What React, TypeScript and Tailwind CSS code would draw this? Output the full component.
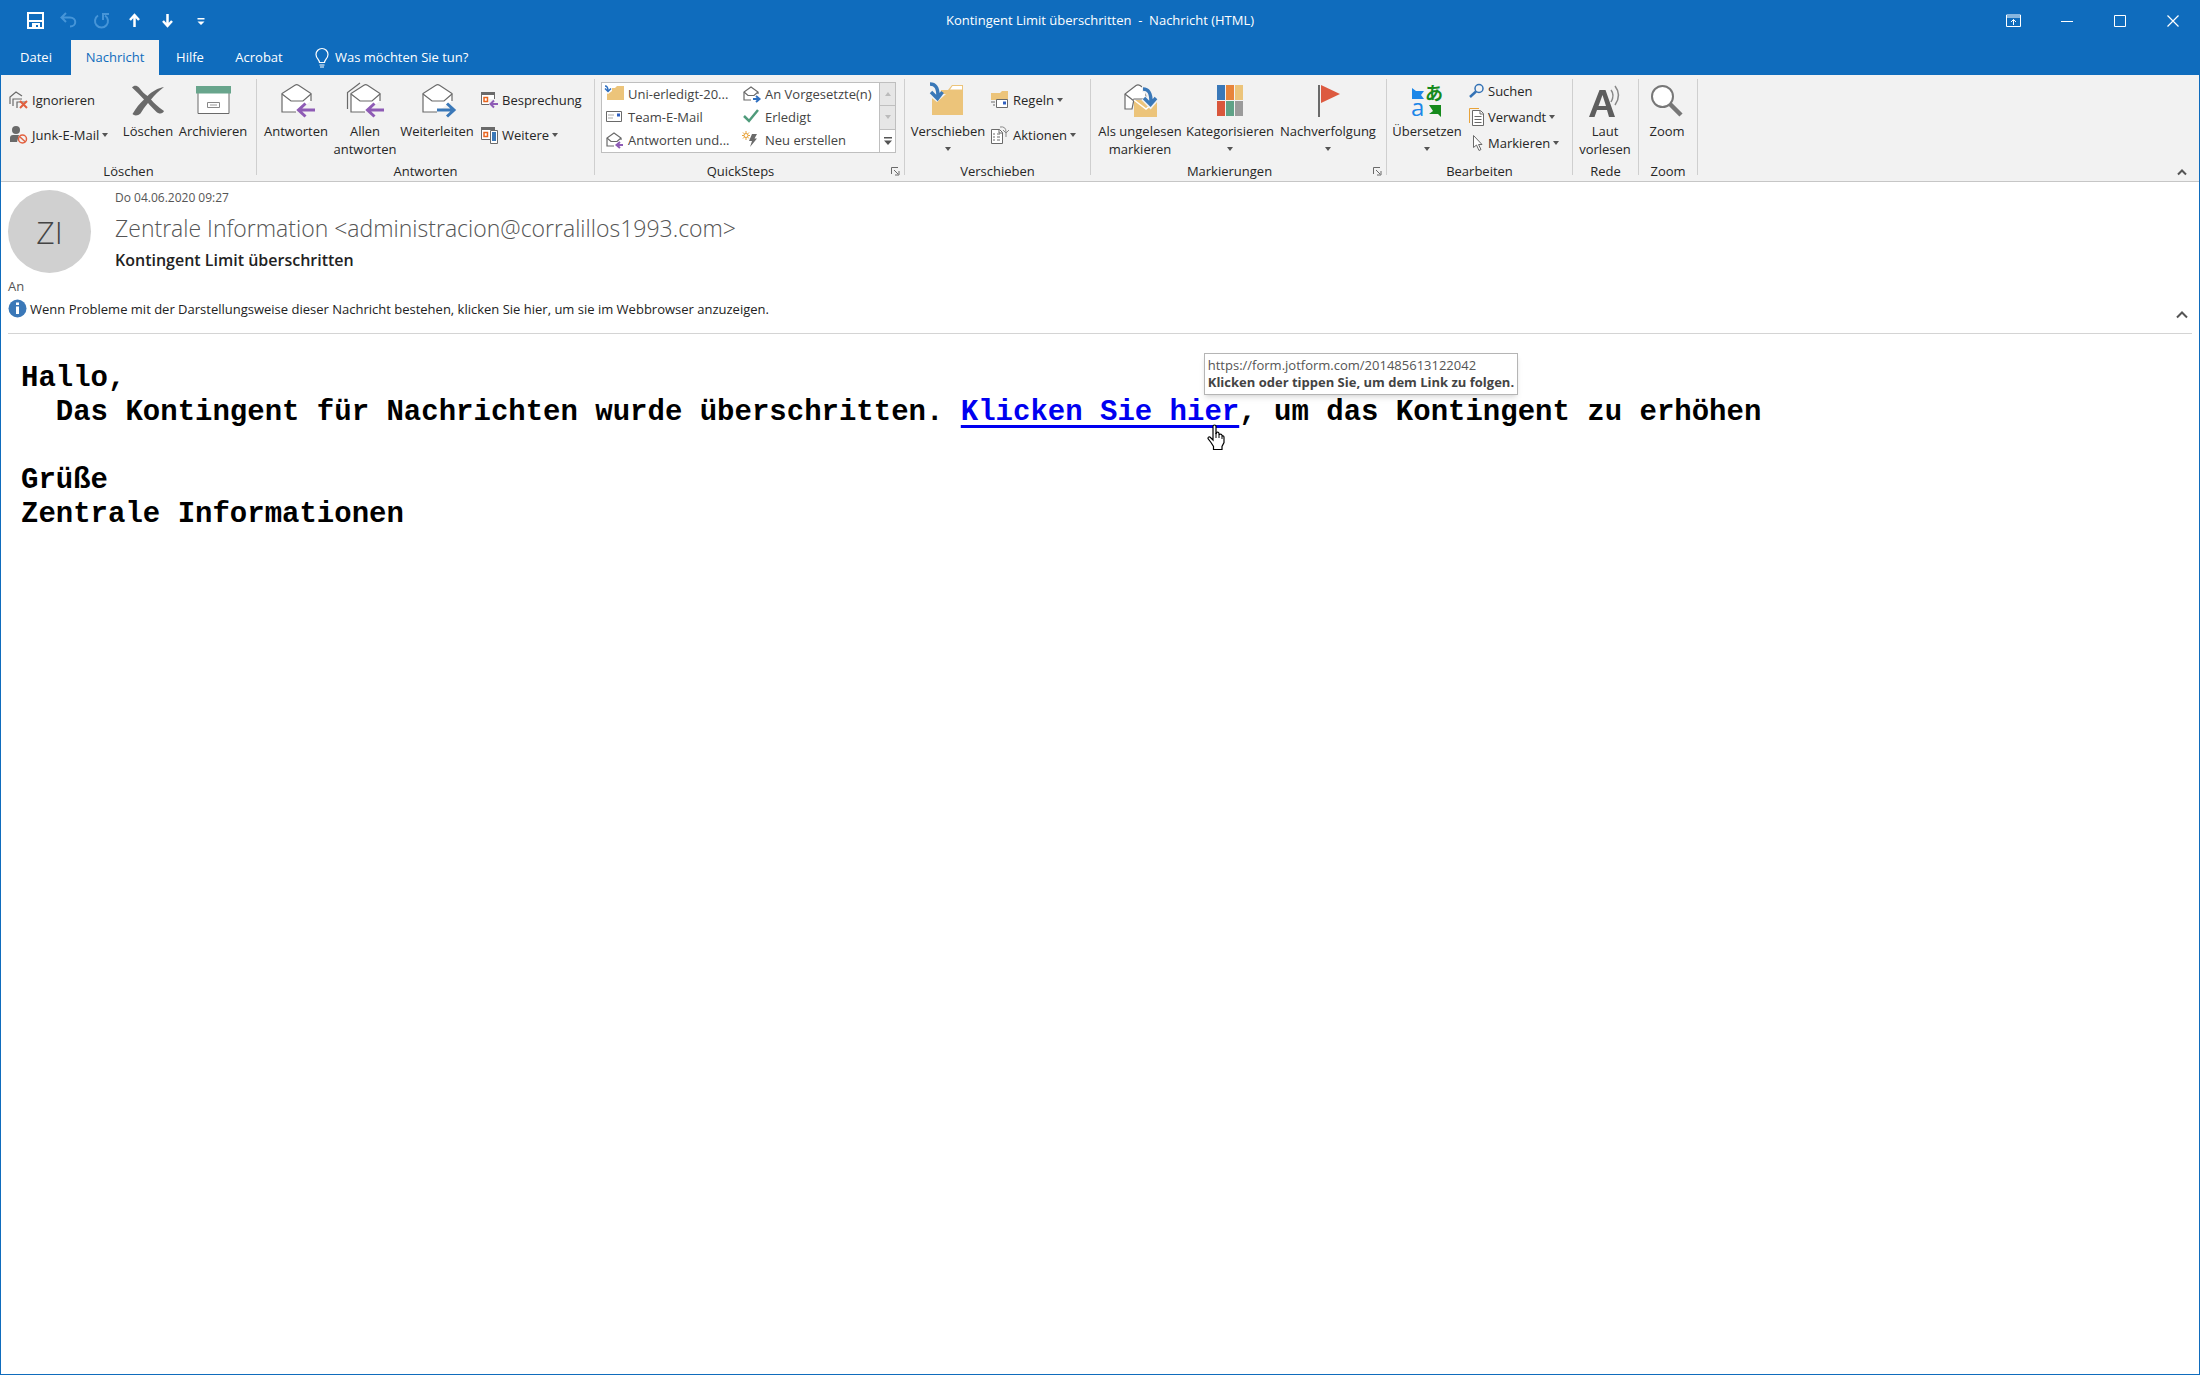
import type { ReactNode } from "react";

const GRAY = "#6a6a6a";
const PURPLE = "#8e5bb5";
const BLUE = "#3a78b8";
const SAND = "#ecc47a";

type IconProps = { w?: number; h?: number; children: ReactNode };

function Svg({ w = 36, h = 36, children }: IconProps) {
  return (
    <svg width={w} height={h} viewBox={`0 0 ${w} ${h}`} fill="none" aria-hidden="true" className="shrink-0 overflow-visible">
      {children}
    </svg>
  );
}

function Caret() {
  return (
    <Svg w={6} h={4}>
      <path d="M0 0h6L3 4z" fill="#555" />
    </Svg>
  );
}

/* ---------- large icons ---------- */

function Envelope({ arrow, stacked }: { arrow: "left" | "right"; stacked?: boolean }) {
  return (
    <Svg>
      {stacked && <path d="M.5 27V10.500L13 1" stroke={GRAY} strokeWidth="1.200" />}
      <path d="M33 19V11.500L20.500 3.200q-1.800-1-3.600 0L4 11.500V30h14" fill="#fff" stroke={GRAY} strokeWidth="1.200" />
      <path d="M4 12l9 7h12l8-7" stroke={GRAY} strokeWidth="1.200" />
      {arrow === "left" ? (
        <path d="M37 28H21M27.500 21.500L20.500 28l7 6.500" stroke={PURPLE} strokeWidth="3" />
      ) : (
        <path d="M18 28h16M28 21.500l7 6.500-7 6.500" stroke={BLUE} strokeWidth="3" />
      )}
    </Svg>
  );
}

function DeleteIcon() {
  return (
    <Svg>
      <path d="M2 5.500C4 3 7 3.500 9 5.500c3 4 6 7 8.500 8.500C22 9.500 28 6 34 5c-5 4-9.500 8-13 12.500 3 3.500 7 7.500 13 11.500-1 3-5 3.500-8 .5-3-3-6-6-8-8.500-3 3.500-5.500 7-7.500 10.500C8 34 4 34 2.500 32 6 26 10 21 14 17.500 10 13 6 9 2 5.500z" fill={GRAY} />
    </Svg>
  );
}

function ArchiveIcon() {
  return (
    <Svg>
      <path d="M3 10h31v21.500H3z" fill="#fff" stroke={GRAY} />
      <path d="M1 4h35v7.500H1z" fill="#68a58c" />
      <path d="M12.500 20.500h12v5h-12z" stroke="#888" />
      <path d="M15 23h7" stroke="#999" />
    </Svg>
  );
}

function FolderArrow() {
  return (
    <Svg>
      <path d="M2 8h16l4-5h11v30H2z" fill={SAND} />
      <path d="M20 7.500l2.500-3.500H32v3.500z" fill="#fff" />
      <path d="M-2-1h13v13h5l-9 8-9-7z" fill="#f2f2f2" />
      <path d="M0 2c6 0 8 4 8 12M1 10l6.500 6.500L12.500 10" stroke={BLUE} strokeWidth="3.500" />
    </Svg>
  );
}

function UnreadIcon() {
  return (
    <Svg>
      <path d="M10 27H3V12L14 3.500q2-1.200 4 0l6 4V17H12z" fill="#fff" stroke={GRAY} strokeWidth="1.200" />
      <path d="M3 12l9 7" stroke={GRAY} strokeWidth="1.200" />
      <path d="M12 18h23v17H12z" fill={SAND} />
      <path d="M12 18l12 9 11-9" stroke="#fff" strokeWidth="1.500" />
      <path d="M20 7c6 0 8 4 8 13M21.500 16l7 7 6-7" stroke="#f2f2f2" strokeWidth="6" />
      <path d="M21 7c6 0 8 4 8 13M22 16l6.500 6.500L34 16" stroke={BLUE} strokeWidth="3.500" />
    </Svg>
  );
}

function CategoriesIcon() {
  return (
    <Svg>
      <path d="M5 3h8v15H5z" fill={BLUE} />
      <path d="M14 3h8v15h-8z" fill="#e8843a" />
      <path d="M23 3h8v15h-8z" fill={SAND} />
      <path d="M5 19h8v15H5z" fill="#d9573c" />
      <path d="M14 19h8v15h-8z" fill="#5fa287" />
      <path d="M23 19h8v15h-8z" fill="#9b9b9b" />
    </Svg>
  );
}

function FlagIcon() {
  return (
    <Svg>
      <path d="M8 3h2v32H8z" fill={GRAY} />
      <path d="M11 3l19 9-19 9z" fill="#dd5a40" />
    </Svg>
  );
}

function TranslateIcon() {
  return (
    <Svg>
      <path d="M3 6l4 3h8l-3 4 3 4H3z" fill="#1c87e8" />
      <path d="M20 23h12v12l-3-3h-9l4-3z" fill="#158a1c" />
      <text x="16" y="18" fontSize="18" fontWeight="700" fill="#158a1c" className="font-['Noto_Sans_CJK_JP',sans-serif]">あ</text>
      <text x="2" y="34" fontSize="24" fill="#1c87e8" className="font-['Open_Sans',sans-serif]">a</text>
    </Svg>
  );
}

function ReadAloudIcon() {
  return (
    <Svg>
      <path d="M2 35L12.500 8h6L28 35h-6l-2-7H10l-2.500 7zM11.500 24h7.500L15.500 13z" fill="#5e5e5e" fillRule="evenodd" />
      <path d="M24 8q4 5 0 12M28 4q7 9 0 19" stroke="#888" strokeWidth="1.500" />
    </Svg>
  );
}

function ZoomIcon() {
  return (
    <Svg>
      <path d="M21 22l11 11" stroke="#777" strokeWidth="4.500" />
      <circle cx="13.500" cy="14.500" r="10.500" fill="#fff" stroke="#777" strokeWidth="2" />
    </Svg>
  );
}

/* ---------- small icons ---------- */

function IgnoreIcon() {
  return (
    <Svg w={20} h={18}>
      <path d="M1 13V6l6-5 6 4M4 15V8h9M8 17v-6h9" stroke={GRAY} strokeWidth="1.200" />
      <path d="M11 10l7 7m0-7l-7 7" stroke="#e2603f" strokeWidth="2" />
    </Svg>
  );
}

function JunkIcon() {
  return (
    <Svg w={20} h={18}>
      <circle cx="7" cy="4" r="4" fill={GRAY} />
      <path d="M1 16V12q0-3 3-3h6l-2 7z" fill={GRAY} />
      <circle cx="13.500" cy="13" r="4" fill="#f2f2f2" stroke="#e2603f" strokeWidth="1.500" />
      <path d="M10.500 10.500l6 5.500" stroke="#e2603f" strokeWidth="1.500" />
    </Svg>
  );
}

function Calendar({ phone }: { phone?: boolean }) {
  return (
    <Svg w={20} h={18}>
      <path d="M2.500 1.500h13v12h-13z" fill="#fff" stroke={GRAY} />
      <path d="M2 1h14v3H2z" fill={GRAY} />
      <path d="M5 6.500h3.500v4H5z" stroke="#e8641e" strokeWidth="1.500" />
      {phone ? (
        <>
          <path d="M11.500 4.500h7v13h-7z" fill="#fff" stroke={GRAY} />
          <path d="M13 6h4v9h-4z" fill={BLUE} />
        </>
      ) : (
        <>
          <path d="M10 8h9v9h-9z" fill="#f2f2f2" />
          <path d="M19 13h-7m3-3.500L11.500 13l3.500 3.500" stroke={PURPLE} strokeWidth="2" />
        </>
      )}
    </Svg>
  );
}

function SmallEnvelope({ arrow }: { arrow: "left" | "right" }) {
  return (
    <Svg w={20} h={18}>
      <path d="M16 8V6L9 1 2 6v8h7" stroke={GRAY} strokeWidth="1.200" />
      <path d="M2 6l4 3.500h6L16 6" stroke={GRAY} strokeWidth="1.200" />
      {arrow === "left" ? (
        <path d="M18 13h-6m3-3l-3.500 3 3.500 3" stroke={PURPLE} strokeWidth="2" />
      ) : (
        <path d="M11 13h6m-3-3l3.500 3-3.500 3" stroke="#2f6fc0" strokeWidth="2" />
      )}
    </Svg>
  );
}

function SmallFolder() {
  return (
    <Svg w={20} h={18}>
      <path d="M2 2h8l2-2h7v14H2z" fill={SAND} />
      <path d="M-1-1h8v6L3 8-1 5z" fill="#fff" />
      <path d="M0 0q3 0 3 5M0 2.500L3 5.500l3-3" stroke="#2f6fc0" strokeWidth="1.500" />
    </Svg>
  );
}

function MailCard() {
  return (
    <Svg w={20} h={18}>
      <path d="M1.500 2.500h15v10h-15z" fill="#fff" stroke={GRAY} />
      <path d="M3 6h6M3 9h5" stroke="#aaa" />
      <path d="M12 4.500h3v3h-3z" fill="#2f5fc0" />
    </Svg>
  );
}

function CheckIcon() {
  return (
    <Svg w={20} h={18}>
      <path d="M2 7l5 5 9-11" stroke="#4f9b7b" strokeWidth="2.500" />
    </Svg>
  );
}

function NewIcon() {
  return (
    <Svg w={20} h={18}>
      <path d="M4-1v9M0 3.500h8M1 .500l6 6M7 .500l-6 6" stroke="#e8a33a" />
      <circle cx="4" cy="3.500" r="2" fill="#fff" stroke="#e8a33a" />
      <path d="M10 2h5l-2.500 4.500H15L8 15l2-6H7z" fill={GRAY} />
    </Svg>
  );
}

function RulesIcon() {
  return (
    <Svg w={20} h={18}>
      <path d="M1 2h9l2-2h6v9H1z" fill={SAND} />
      <path d="M6.500 8.500h11v8h-11z" fill="#fff" stroke={GRAY} />
      <path d="M1 11h4M3 14h2" stroke={GRAY} />
      <path d="M13 10.500h3v3h-3z" fill="#2f5fc0" />
    </Svg>
  );
}

function ActionsIcon() {
  return (
    <Svg w={20} h={18}>
      <path d="M1.500 3.500h8l3 3v11h-11z" fill="#fff" stroke={GRAY} />
      <path d="M9 3.500V7h3.500M3 8h2m2 0h3M3 11h2m2 0h3M3 14h2m2 0h3" stroke={GRAY} />
      <path d="M10 1q6-1 6 5v5M13 4l3 3 3-3" stroke="#888" />
    </Svg>
  );
}

function SearchIcon() {
  return (
    <Svg w={16} h={16}>
      <circle cx="10" cy="5.500" r="4" stroke="#3372b5" strokeWidth="1.500" />
      <path d="M7 8.500l-6 5.500" stroke="#3372b5" strokeWidth="2.500" />
    </Svg>
  );
}

function RelatedIcon() {
  return (
    <Svg w={16} h={18}>
      <path d="M.5 15V.5H10" stroke="#e8a33a" />
      <path d="M3.500 2.500h8l3 3v12h-11z" fill="#fff" stroke={GRAY} />
      <path d="M11 3v3h3M5.500 8.500h7M5.500 11.500h7M5.500 14.500h7" stroke={GRAY} />
    </Svg>
  );
}

function PointerIcon() {
  return (
    <Svg w={16} h={18}>
      <path d="M4.500 1.500v12l3-2.500 2.500 5.500 2-1-2.500-5H13z" fill="#fff" stroke={GRAY} />
    </Svg>
  );
}

/* ---------- ribbon parts ---------- */

function Group({ label, className, launcher, children }: { label: string; className: string; launcher?: boolean; children: ReactNode }) {
  return (
    <section className={`flex shrink-0 ${className}`}>
      <div className="flex min-w-0 flex-1 flex-col">
        <div className="flex h-[86px] items-start pt-[7px]">{children}</div>
        <div className="flex items-center leading-5">
          <span className="flex-1 text-center">{label}</span>
          {launcher && (
            <button aria-label={`${label} Optionen`} className="pr-1 pl-[5px]">
              <Svg w={9} h={9}>
                <path d="M.5 7V.5H7M3 3l4 4M8 4v4H4" stroke={GRAY} />
              </Svg>
            </button>
          )}
        </div>
      </div>
      <div className="mt-1 h-24 w-px bg-[#cfcfcf]" />
    </section>
  );
}

type BigButtonProps = { icon: ReactNode; label: string; second?: string; caret?: boolean; className: string };

function BigButton({ icon, label, second, caret, className }: BigButtonProps) {
  return (
    <button className={`flex shrink-0 flex-col items-center leading-[18px] whitespace-nowrap ${className}`}>
      {icon}
      <span className="mt-1">{label}</span>
      {second && <span>{second}</span>}
      {caret && (
        <span className="flex h-[18px] items-center">
          <Caret />
        </span>
      )}
    </button>
  );
}

function SmallButton({ icon, label, caret }: { icon: ReactNode; label: string; caret?: boolean }) {
  return (
    <button className="flex items-center gap-[3px] leading-[18px] whitespace-nowrap">
      {icon}
      <span>{label}</span>
      {caret && <Caret />}
    </button>
  );
}

const quickSteps = [
  { icon: <SmallFolder />, label: "Uni-erledigt-20..." },
  { icon: <SmallEnvelope arrow="right" />, label: "An Vorgesetzte(n)" },
  { icon: <MailCard />, label: "Team-E-Mail" },
  { icon: <CheckIcon />, label: "Erledigt" },
  { icon: <SmallEnvelope arrow="left" />, label: "Antworten und..." },
  { icon: <NewIcon />, label: "Neu erstellen" },
];

function TitleBar() {
  return (
    <div className="flex h-[39px] items-center justify-between text-white">
      <div className="flex flex-1 [&>button]:flex [&>button]:w-[33px] [&>button]:justify-center [&>button:first-child]:ml-[18px]">
        <button aria-label="Speichern">
          <Svg w={17} h={17}>
            <path d="M1 1h15v15H1z" stroke="#fff" strokeWidth="2" />
            <path d="M2 8h13v2H2zM5 11h8v5h-2v-3H9v3H5z" fill="#fff" />
          </Svg>
        </button>
        <button aria-label="Rückgängig">
          <Svg w={17} h={17}>
            <path d="M6 1L1.500 5.500 6 10M2 5.500h8c7 0 7 9 0 9" stroke="#4695d8" strokeWidth="2" />
          </Svg>
        </button>
        <button aria-label="Wiederholen">
          <Svg w={17} h={17}>
            <path d="M5 3.500a6.500 6.500 0 1 0 7 0M10 8V2h6" stroke="#4695d8" strokeWidth="2" />
          </Svg>
        </button>
        <button aria-label="Vorheriges Element">
          <Svg w={17} h={17}>
            <path d="M8.500 15V4M4 8l4.500-5L13 8" stroke="#fff" strokeWidth="2.500" />
          </Svg>
        </button>
        <button aria-label="Nächstes Element">
          <Svg w={17} h={17}>
            <path d="M8.500 2v11M4 9l4.500 5L13 9" stroke="#fff" strokeWidth="2.500" />
          </Svg>
        </button>
        <button aria-label="Symbolleiste anpassen">
          <Svg w={17} h={17}>
            <path d="M5.500 6h7v1.500h-7zM5.500 9.500h7L9 13z" fill="#fff" />
          </Svg>
        </button>
      </div>
      <h1 className="whitespace-pre">Kontingent Limit überschritten  -  Nachricht (HTML)</h1>
      <div className="flex flex-1 justify-end [&>button]:flex [&>button]:w-[53px] [&>button]:items-center [&>button]:justify-center">
        <button aria-label="Menüband-Anzeigeoptionen">
          <Svg w={15} h={13}>
            <path d="M.5 1h14v11.500H.5zM0 3h15M7.500 11V5.500M5 8l2.500-2.500L10 8" stroke="#fff" />
          </Svg>
        </button>
        <button aria-label="Minimieren">
          <Svg w={12} h={12}>
            <path d="M0 6.500h12" stroke="#fff" />
          </Svg>
        </button>
        <button aria-label="Maximieren">
          <Svg w={12} h={12}>
            <path d="M.5.5h11v11H.5z" stroke="#fff" />
          </Svg>
        </button>
        <button aria-label="Schließen">
          <Svg w={12} h={12}>
            <path d="M.5.500l11 11m0-11l-11 11" stroke="#fff" strokeWidth="1.200" />
          </Svg>
        </button>
      </div>
    </div>
  );
}

function Tabs() {
  return (
    <nav className="flex h-[35px] items-stretch text-white">
      <button className="w-[70px]">Datei</button>
      <button className="w-[88px] bg-[#f2f2f2] text-[#0f6cbd]">Nachricht</button>
      <button className="w-[62px]">Hilfe</button>
      <button className="w-[76px]">Acrobat</button>
      <label className="ml-[18px] flex items-center gap-[6px]">
        <Svg w={14} h={20}>
          <path d="M4.500 14.500c0-3-3.500-4-3.500-8a6 6 0 0 1 12 0c0 4-3.500 5-3.500 8zM4.500 17h5M5 19h4" stroke="#fff" strokeWidth="1.200" />
        </Svg>
        <input aria-label="Was möchten Sie tun?" placeholder="Was möchten Sie tun?" className="w-40 outline-none placeholder:text-white" />
      </label>
    </nav>
  );
}

function Ribbon() {
  return (
    <div className="flex h-[107px] border-b border-[#c6c6c6] bg-[#f2f2f2] text-[#262626]">
      <Group label="Löschen" className="w-64">
        <div className="flex w-[114px] flex-col items-start gap-[17px] pt-[9px] pl-2">
          <SmallButton icon={<IgnoreIcon />} label="Ignorieren" />
          <SmallButton icon={<JunkIcon />} label="Junk-E-Mail" caret />
        </div>
        <BigButton className="w-[66px]" icon={<DeleteIcon />} label="Löschen" />
        <BigButton className="w-16" icon={<ArchiveIcon />} label="Archivieren" />
      </Group>
      <Group label="Antworten" className="w-[338px]">
        <BigButton className="ml-1 w-[70px]" icon={<Envelope arrow="left" />} label="Antworten" />
        <BigButton className="w-[68px]" icon={<Envelope arrow="left" stacked />} label="Allen" second="antworten" />
        <BigButton className="w-[76px]" icon={<Envelope arrow="right" />} label="Weiterleiten" />
        <div className="flex flex-col items-start gap-[17px] pt-[9px] pl-1">
          <SmallButton icon={<Calendar />} label="Besprechung" />
          <SmallButton icon={<Calendar phone />} label="Weitere" caret />
        </div>
      </Group>
      <Group label="QuickSteps" className="w-[310px]" launcher>
        <div className="mr-2 ml-[6px] flex flex-1 border border-[#bfbfbf] bg-white text-[#444]">
          <div className="grid flex-1 grid-cols-[137px_1fr] pl-[3px]">
            {quickSteps.map((step) => (
              <button key={step.label} className="flex h-[23px] items-center gap-[3px] pt-px whitespace-nowrap">
                {step.icon}
                {step.label}
              </button>
            ))}
          </div>
          <div className="flex w-4 flex-col border-l border-[#bfbfbf] [&>button]:flex [&>button]:flex-1 [&>button]:items-center [&>button]:justify-center">
            <button aria-label="Nach oben" className="bg-[#e6e6e6]">
              <Svg w={6} h={4}>
                <path d="M0 4h6L3 0z" fill="#bbb" />
              </Svg>
            </button>
            <button aria-label="Nach unten" className="border-y border-[#bfbfbf] bg-[#e6e6e6]">
              <Svg w={6} h={4}>
                <path d="M0 0h6L3 4z" fill="#bbb" />
              </Svg>
            </button>
            <button aria-label="Mehr">
              <Svg w={8} h={8}>
                <path d="M0 0h8v1.500H0zM0 3.500h8L4 8z" fill="#555" />
              </Svg>
            </button>
          </div>
        </div>
      </Group>
      <Group label="Verschieben" className="w-[186px]">
        <BigButton className="ml-[3px] w-20" icon={<FolderArrow />} label="Verschieben" caret />
        <div className="flex flex-col items-start gap-[17px] pt-[9px] pl-[2px]">
          <SmallButton icon={<RulesIcon />} label="Regeln" caret />
          <SmallButton icon={<ActionsIcon />} label="Aktionen" caret />
        </div>
      </Group>
      <Group label="Markierungen" className="w-[296px]" launcher>
        <BigButton className="ml-1 w-[90px]" icon={<UnreadIcon />} label="Als ungelesen" second="markieren" />
        <BigButton className="w-[90px]" icon={<CategoriesIcon />} label="Kategorisieren" caret />
        <BigButton className="w-[106px]" icon={<FlagIcon />} label="Nachverfolgung" caret />
      </Group>
      <Group label="Bearbeiten" className="w-[186px]">
        <BigButton className="ml-[3px] w-[74px]" icon={<TranslateIcon />} label="Übersetzen" caret />
        <div className="flex flex-col items-start gap-2 pl-[5px]">
          <SmallButton icon={<SearchIcon />} label="Suchen" />
          <SmallButton icon={<RelatedIcon />} label="Verwandt" caret />
          <SmallButton icon={<PointerIcon />} label="Markieren" caret />
        </div>
      </Group>
      <Group label="Rede" className="w-[66px]">
        <BigButton className="w-16" icon={<ReadAloudIcon />} label="Laut" second="vorlesen" />
      </Group>
      <Group label="Zoom" className="w-[59px]">
        <BigButton className="w-14" icon={<ZoomIcon />} label="Zoom" />
      </Group>
      <button aria-label="Menüband reduzieren" className="mr-3 mb-[5px] ml-auto self-end">
        <Svg w={10} h={8}>
          <path d="M1 6.500l4-4 4 4" stroke="#555" strokeWidth="2" />
        </Svg>
      </button>
    </div>
  );
}

function MessageHeader() {
  return (
    <header className="mx-[7px] flex h-[152px] flex-col border-b border-[#d4d4d4] pt-2">
      <div className="flex gap-6">
        <div className="flex size-[83px] items-center justify-center rounded-full bg-[#d0d0d0] text-[32px] font-light text-[#444]">ZI</div>
        <div className="text-[#555]">
          <p className="text-xs leading-4">Do 04.06.2020 09:27</p>
          <p className="mt-[6px] text-[23px] leading-8 font-light">Zentrale Information &lt;administracion@corralillos1993.com&gt;</p>
          <h2 className="mt-1 text-base leading-6 font-semibold text-[#222]">Kontingent Limit überschritten</h2>
        </div>
      </div>
      <p className="mt-[5px] leading-4 text-[#555]">An</p>
      <div className="mt-1 flex items-center justify-between">
        <button className="flex items-center gap-[3px] leading-5 text-[#222]">
          <Svg w={19} h={19}>
            <circle cx="9.500" cy="9.500" r="9" fill={BLUE} />
            <path d="M8 3.500h3v2.500H8zM8 7.500h3V15H8z" fill="#fff" />
          </Svg>
          Wenn Probleme mit der Darstellungsweise dieser Nachricht bestehen, klicken Sie hier, um sie im Webbrowser anzuzeigen.
        </button>
        <button aria-label="Kopfzeile reduzieren" className="mt-3 mr-1">
          <Svg w={12} h={9}>
            <path d="M1 7.500l5-5 5 5" stroke="#555" strokeWidth="2" />
          </Svg>
        </button>
      </div>
    </header>
  );
}

function HandCursor() {
  return (
    <svg width="18" height="26" viewBox="0 0 18 26" aria-hidden="true" className="absolute top-7 right-[14px]">
      <path
        d="M6 16V2.500a1.500 1.500 0 0 1 3 0V10l.5-1.500q2-1 2.500 1l.5 1q2-1 2.500 1l.5.5q1.500-.5 1.500 1.500v5l-2 4v3H6.500v-3L4 18.500l-3-4q0-2 2-1.500z"
        fill="#fff"
        stroke="#000"
        strokeWidth="1.200"
      />
      <path d="M9 9v5M12 10v4M15 12v3" stroke="#000" />
    </svg>
  );
}

function MessageBody() {
  return (
    <main className="px-5 pt-7 font-['Courier_New','Liberation_Mono',monospace] text-[29px] leading-[34px] font-bold whitespace-pre-wrap text-black">
      <p>Hallo,</p>
      <p>
        {"  Das Kontingent für Nachrichten wurde überschritten. "}
        <span className="relative inline-block">
          <a href="https://form.jotform.com/201485613122042" className="text-[#0000f0] underline decoration-[3px] underline-offset-[5px]">
            Klicken Sie hier
          </a>
          <span
            role="tooltip"
            className="absolute bottom-[35px] left-[243px] border border-[#b5b5b5] bg-white px-[3px] py-[3px] font-['Open_Sans',sans-serif] text-[13px] leading-[17px] font-normal whitespace-nowrap text-[#555] shadow-md"
          >
            <span className="block">https://form.jotform.com/201485613122042</span>
            <span className="block font-bold text-[#444]">Klicken oder tippen Sie, um dem Link zu folgen.</span>
          </span>
          <HandCursor />
        </span>
        , um das Kontingent zu erhöhen
      </p>
      <p className="mt-[34px]">Grüße</p>
      <p>Zentrale Informationen</p>
    </main>
  );
}

export default function App() {
  return (
    <div className="flex min-h-screen flex-col border border-[#0f6cbd] bg-white font-['Open_Sans','Noto_Sans',sans-serif] text-[13px]">
      <div className="bg-[#0f6cbd]">
        <TitleBar />
        <Tabs />
      </div>
      <Ribbon />
      <MessageHeader />
      <MessageBody />
    </div>
  );
}
